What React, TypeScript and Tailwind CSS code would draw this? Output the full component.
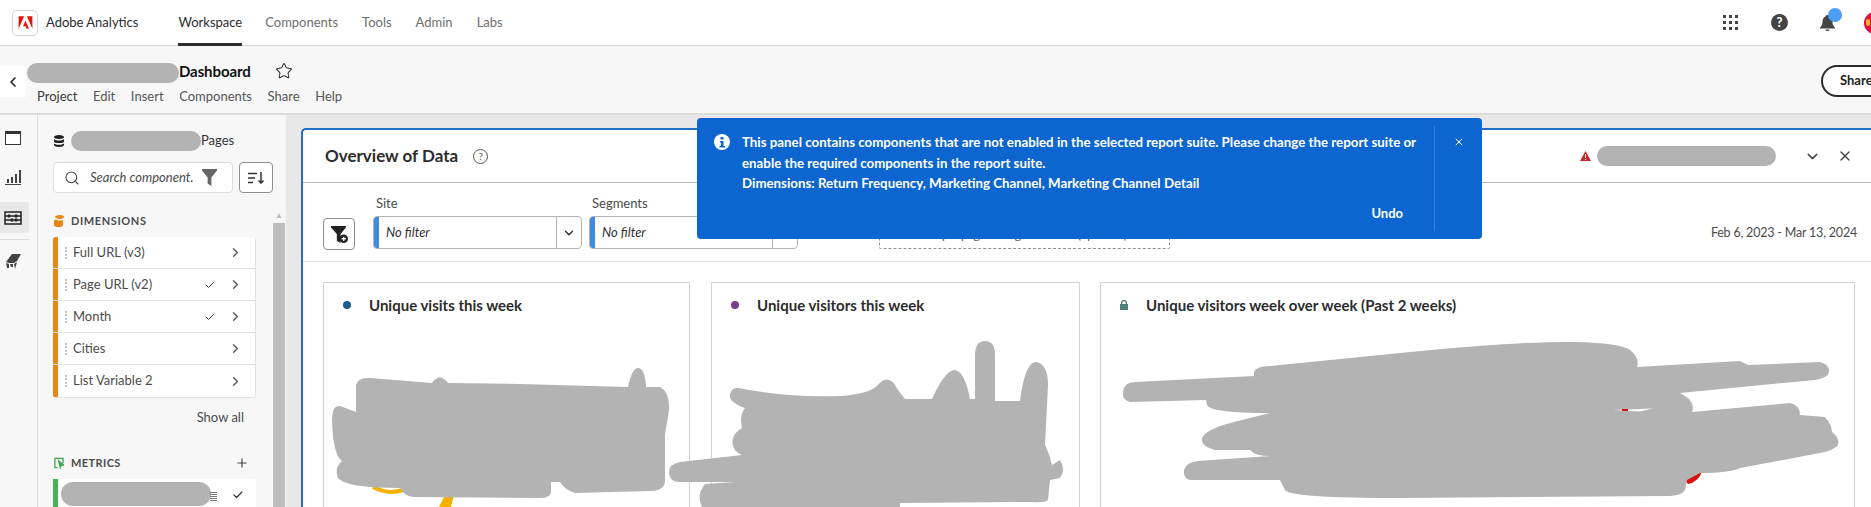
import { Check, ChevronDown, ChevronLeft, ChevronRight, Plus, Search, Star, X } from "lucide-react";

const navItems = ["Components", "Tools", "Admin", "Labs"];
const menuItems = ["Project", "Edit", "Insert", "Components", "Share", "Help"];

const dimensions = [
  { label: "Full URL (v3)", used: false },
  { label: "Page URL (v2)", used: true },
  { label: "Month", used: true },
  { label: "Cities", used: false },
  { label: "List Variable 2", used: false },
];

const Funnel = ({ className }: { className: string }) => (
  <svg viewBox="0 0 16 18" className={className} fill="currentColor">
    <path d="M0 0h16v1.5L10 9v9l-4-2.5V9L0 1.5z" />
  </svg>
);

const Row = ({ label, used }: { label: string; used: boolean }) => (
  <div className="flex h-[32px] items-center border-b border-[#e1e1e1] bg-white last:border-b-0">
    <span className="h-full w-[5px] shrink-0 bg-[#e68619]" />
    <span className="ml-[7px] h-[12px] w-[2px] shrink-0 border-l-2 border-dotted border-[#c8c8c8]" />
    <span className="ml-[6px] text-[13px] text-[#4b4b4b]">{label}</span>
    {used && <Check className="ml-auto h-[12px] w-[12px] text-[#444]" strokeWidth={2} />}
    <ChevronRight className={`${used ? "ml-[12px]" : "ml-auto"} mr-[12px] h-[15px] w-[15px] text-[#555]`} strokeWidth={2} />
  </div>
);

const FilterSelect = ({ label, width }: { label: string; width: string }) => (
  <div className={width}>
    <div className="mb-[5px] pl-[3px] text-[13px] leading-[16px] text-[#4b4b4b]">{label}</div>
    <div className="flex h-[33px] overflow-hidden rounded-[4px] border border-[#b3b3b3] bg-white">
      <span className="w-[5px] shrink-0 bg-[#3f8be0]" />
      <span className="ml-[7px] flex-1 text-[13px] leading-[31px] text-[#333] italic">No filter</span>
      <span className="flex w-[25px] items-center justify-center border-l border-[#b3b3b3]">
        <ChevronDown className="h-[14px] w-[14px] text-[#333]" strokeWidth={2.5} />
      </span>
    </div>
  </div>
);

const Card = ({ title, width, mark }: { title: string; width: string; mark: React.ReactNode }) => (
  <div className={`${width} h-[300px] shrink-0 border border-[#d3d3d3] bg-white`}>
    <div className="flex h-[44px] items-center">
      <span className="flex w-[45px] justify-center">{mark}</span>
      <span className="text-[15px] font-bold text-[#2c2c2c]">{title}</span>
    </div>
  </div>
);

export default function App() {
  return (
    <div className="relative flex h-[507px] w-[1871px] flex-col overflow-hidden bg-white font-['Lato',sans-serif]">
      <header className="flex h-[46px] shrink-0 items-center border-b border-[#d5d5d5] bg-white">
        <div className="ml-[12px] flex h-[26px] w-[26px] items-center justify-center rounded-[5px] border border-[#d5d5d5]">
          <svg viewBox="0 0 24 24" className="h-[15px] w-[15px]" fill="#eb1000">
            <path d="M14.3 2H23v20zM9.7 2H1v20zM12 9.2 17.6 22h-3.7l-1.700-4.200H8z" />
          </svg>
        </div>
        <span className="ml-[8px] text-[13px] text-[#2c2c2c]">Adobe Analytics</span>
        <nav className="ml-[40px] flex h-full gap-[24px] text-[13px] text-[#6e6e6e]">
          <span className="mr-[-1px] flex h-[46px] items-center border-b-[3px] border-[#2c2c2c] pt-[3px] text-[#2c2c2c]">Workspace</span>
          {navItems.map((item) => (
            <span key={item} className="flex items-center">
              {item}
            </span>
          ))}
        </nav>
        <div className="mr-[-15px] ml-auto flex items-center">
          <svg viewBox="0 0 15 15" className="h-[15px] w-[15px]" fill="#444">
            <path d="M0 0h3v3H0zM6 0h3v3H6zM12 0h3v3h-3zM0 6h3v3H0zM6 6h3v3H6zM12 6h3v3h-3zM0 12h3v3H0zM6 12h3v3H6zM12 12h3v3h-3z" />
          </svg>
          <span className="ml-[33px] flex h-[17px] w-[17px] items-center justify-center rounded-full bg-[#444] text-[13px] leading-none font-black text-white">?</span>
          <span className="relative ml-[32px] h-[16px] w-[15px]">
            <svg viewBox="0 0 15 16" className="h-[16px] w-[15px]" fill="#444">
              <path d="M7.5 0C9 0 9.5 1 9.5 1.5 12 2.5 12.5 5 12.5 7c0 3 1 4 2.5 5.5v1H0v-1C1.500 11 2.500 10 2.500 7c0-2 .5-4.500 3-5.500C5.500 1 6 0 7.500 0zM5.500 14.500h4C9.500 15.500 8.500 16 7.500 16s-2-.5-2-1.500z" />
            </svg>
            <span className="absolute top-[-7px] left-[8px] h-[14px] w-[14px] rounded-full bg-[#4b9cf5]" />
          </span>
          <span className="ml-[29px] flex h-[22px] w-[22px] items-center rounded-full bg-[#e0103a] pl-[2px]">
            <span className="h-[7px] w-[4px] rounded-full bg-[#f0b429]" />
          </span>
        </div>
      </header>

      <div className="flex h-[69px] shrink-0 border-b-2 border-[#dcdcdc] bg-[#f7f7f7]">
        <div className="mt-[20px] flex h-[31px] w-[26px] items-center justify-center bg-white">
          <ChevronLeft className="h-[16px] w-[16px] text-[#222]" strokeWidth={2.5} />
        </div>
        <div className="pt-[13px]">
          <div className="flex h-[24px] items-start">
            <span className="mt-[4px] ml-px h-[20px] w-[152px] rounded-full bg-[#b3b3b3]" />
            <span className="text-[15px] leading-[24px] font-bold tracking-[-0.1px] text-[#111]">Dashboard</span>
            <Star className="mt-[3px] ml-[24px] h-[18px] w-[18px] text-[#333]" strokeWidth={1.4} />
          </div>
          <div className="flex h-[28px] items-center gap-[15.6px] pl-[11px] text-[13px] text-[#555]">
            {menuItems.map((item, i) => (
              <span key={item} className={i === 0 ? "text-[#3a3a3a]" : ""}>
                {item}
              </span>
            ))}
          </div>
        </div>
        <div className="mt-[19px] mr-[-50px] ml-auto flex h-[32px] w-[100px] items-center rounded-full border-2 border-[#2c2c2c] bg-white pl-[17px] text-[13px] font-bold text-[#222]">
          Share
        </div>
      </div>

      <main className="flex min-h-0 flex-1 bg-[#e8e8e8]">
        <aside className="w-[38px] shrink-0 border-r border-[#dcdcdc] bg-[#f7f7f7] pt-[16px]">
          <div className="ml-[5px] h-[14px] w-[16px] border border-t-[3px] border-[#333] bg-white" />
          <svg viewBox="0 0 16 15" className="mt-[25px] ml-[5px] h-[15px] w-[16px]" fill="#444">
            <path d="M2 9h2v4H2zM6 7h2v6H6zM10 4h2v9h-2zM14 0h2v13h-2zM0 14h16v1H0z" />
          </svg>
          <div className="mt-[17px] flex h-[31px] w-[29px] items-center rounded-r-[3px] bg-[#e8e8e8] pl-[4px]">
            <svg viewBox="0 0 18 14" className="h-[14px] w-[18px]" fill="none" stroke="#222" strokeWidth="1.5">
              <path d="M1 1h16v12H1zM1 5h16M1 9h16" />
              <path d="M5 3.500v3M12 3.500v3M8 7.500v3M12 7.500v3" strokeWidth="2.500" />
            </svg>
          </div>
          <div className="mt-[6px] h-px w-[29px] bg-[#dcdcdc]" />
          <svg viewBox="0 0 16 15" className="mt-[14px] ml-[5px] h-[15px] w-[16px]" fill="#444">
            <path d="M7 0h9L12 7 9 9H4L1 8zM1 9l3 1v4H2zM5 10h3v3H6zM9 10l3-2-2 7z" />
          </svg>
        </aside>

        <section className="w-[235px] shrink-0 bg-[#f7f7f7] pl-[15px]">
          <div className="flex h-[47px] items-center pt-[5px]">
            <svg viewBox="0 0 10 12" className="ml-px h-[12px] w-[10px]" fill="#222">
              <path d="M0 2c0-1 2-2 5-2s5 1 5 2-2 2-5 2-5-1-5-2zM0 4c1 1 3 1.500 5 1.500S9 5 10 4v2.500C10 7.500 8 8 5 8s-5-.5-5-1.500zM0 8.500c1 1 3 1.200 5 1.200s4-.2 5-1.200V10c0 1-2 2-5 2s-5-1-5-2z" />
            </svg>
            <span className="ml-[7px] h-[20px] w-[130px] rounded-full bg-[#b3b3b3]" />
            <span className="text-[13px] text-[#333]">Pages</span>
          </div>
          <div className="flex">
            <div className="flex h-[31px] w-[180px] shrink-0 items-center rounded-[4px] border border-[#dcdcdc] bg-white pl-[10px]">
              <Search className="h-[16px] w-[16px] shrink-0 text-[#444]" strokeWidth={1.6} />
              <span className="ml-[10px] w-[104px] overflow-hidden text-[13px] whitespace-nowrap text-[#4b4b4b] italic">Search component.</span>
              <Funnel className="ml-[8px] h-[17px] w-[15px] text-[#666]" />
            </div>
            <div className="ml-[6px] flex h-[31px] w-[34px] shrink-0 items-center justify-center rounded-[4px] border border-[#8e8e8e] bg-white">
              <svg viewBox="0 0 16 12" className="h-[12px] w-[16px]" fill="none" stroke="#333" strokeWidth="1.500">
                <path d="M0 1.500h9M0 6h7M0 10.500h5M13 0v11M10.500 8.500 13 11l2.500-2.500" />
              </svg>
            </div>
          </div>
          <div className="mt-[20px] flex h-[16px] items-center">
            <svg viewBox="0 0 10 12" className="ml-px h-[12px] w-[10px]" fill="#e68619">
              <path d="M1 2c0-1 2-2 5-2s4 1 4 2-2 2-4 2-5-1-5-2zM0 6c0-1 1-1.500 2-1.500.5.5 2 1 4 1 2 0 3-.5 3-.5v5c0 1.500-2 2-4.500 2S0 11.500 0 10z" />
            </svg>
            <span className="ml-[7px] text-[11px] font-bold tracking-[0.6px] text-[#4b4b4b]">DIMENSIONS</span>
          </div>
          <div className="mt-[8px] w-[203px] overflow-hidden rounded-[3px] border-r border-b border-[#e1e1e1]">
            {dimensions.map((d) => (
              <Row key={d.label} label={d.label} used={d.used} />
            ))}
          </div>
          <div className="mt-[10px] h-[18px] w-[191px] text-right text-[13px] text-[#4b4b4b]">Show all</div>
          <div className="mt-[29px] flex h-[16px] w-[203px] items-center">
            <svg viewBox="0 0 11 12" className="ml-px h-[12px] w-[10px]" fill="none" stroke="#3da74e" strokeWidth="1.400">
              <path d="M4 11H1V1h9v5" />
              <path d="M5 3.500 10.500 8 8 8.500 7 11z" fill="#3da74e" />
            </svg>
            <span className="ml-[7px] text-[11px] font-bold tracking-[0.4px] text-[#4b4b4b]">METRICS</span>
            <Plus className="mr-[7px] ml-auto h-[14px] w-[14px] text-[#444]" strokeWidth={2} />
          </div>
          <div className="mt-[8px] flex h-[32px] w-[203px] rounded-t-[3px] bg-white">
            <span className="h-full w-[5px] bg-[#44b556]" />
            <span className="mt-[3px] ml-[3px] h-[24px] w-[150px] rounded-full bg-[#b3b3b3]" />
            <svg viewBox="0 0 9 10" className="mt-[12px] ml-[-2px] h-[10px] w-[9px]" fill="none" stroke="#777">
              <path d="M1 1.500h7M1 3.500h7M1 5.500h7M1 7.500h7M1 9.500h7" />
            </svg>
            <Check className="mt-[10px] ml-[14px] h-[12px] w-[12px] text-[#333]" strokeWidth={2.5} />
          </div>
        </section>

        <div className="flex w-[13px] shrink-0 flex-col bg-[#f7f7f7]">
          <div className="mt-[92px] flex h-[16px] w-[12px] items-center justify-center text-[8px] text-[#bdbdbd]">▲</div>
          <div className="w-[12px] flex-1 bg-[#bdbdbd]" />
        </div>

        <div className="min-w-0 flex-1 pt-[13px] pl-[15px]">
          <div className="h-[420px] w-[1600px] rounded-tl-[5px] border-t-2 border-l-2 border-[#1f6fc4] bg-white">
            <div className="flex h-[53px] items-center border-b border-[#b9b9b9]">
              <span className="ml-[22px] text-[17px] font-bold text-[#2c2c2c]">Overview of Data</span>
              <span className="ml-[15px] flex h-[15px] w-[15px] items-center justify-center rounded-full border border-[#555] text-[10px] leading-none text-[#555]">?</span>
              <svg viewBox="0 0 11 10" className="ml-[1092px] h-[10px] w-[11px]" fill="#c9252d">
                <path d="M5.500 0 11 10H0z" />
                <path d="M5 3h1v4H5zM5 8h1v1H5z" fill="#fff" />
              </svg>
              <span className="ml-[6px] h-[20px] w-[179px] rounded-full bg-[#b3b3b3]" />
              <ChevronDown className="ml-[28px] h-[17px] w-[17px] text-[#444]" strokeWidth={2} />
              <X className="ml-[16px] h-[16px] w-[16px] text-[#444]" strokeWidth={2} />
            </div>

            <div className="relative flex h-[79px] items-end border-b border-[#e1e1e1] pb-[12px] pl-[20px]">
              <div className="mb-[-1px] flex h-[32px] w-[32px] items-center justify-center rounded-[4px] border border-[#8e8e8e] bg-white">
                <svg viewBox="0 0 16 16" className="h-[17px] w-[17px]">
                  <path d="M0 0h14v1.500L9 7.500V16L5.500 14V7.500L0 1.500z" fill="#222" />
                  <circle cx="12" cy="12" r="4" fill="#222" />
                  <path d="M12 10v4M10 12h4" stroke="#fff" strokeWidth="1.200" />
                </svg>
              </div>
              <div className="ml-[18px]">
                <FilterSelect label="Site" width="w-[209px]" />
              </div>
              <div className="ml-[7px]">
                <FilterSelect label="Segments" width="w-[209px]" />
              </div>
              <div className="ml-[81px] flex h-[38px] w-[291px] items-center justify-center rounded-[2px] border border-dashed border-[#8e8e8e] pt-[10px] text-[12px] text-[#555]">
                Drop a page or segment here (optional)
              </div>
              <span className="mr-[44px] ml-auto pb-[6px] text-[12.5px] tracking-[-0.2px] whitespace-nowrap text-[#4b4b4b]">Feb 6, 2023 - Mar 13, 2024</span>
            </div>

            <div className="flex pt-[20px] pl-[20px]">
              <Card title="Unique visits this week" width="w-[367px]" mark={<span className="h-[8px] w-[8px] rounded-full bg-[#1f5a8c]" />} />
              <div className="ml-[21px]">
                <Card title="Unique visitors this week" width="w-[369px]" mark={<span className="h-[8px] w-[8px] rounded-full bg-[#7b3f8f]" />} />
              </div>
              <div className="ml-[20px]">
                <Card
                  title="Unique visitors week over week (Past 2 weeks)"
                  width="w-[755px]"
                  mark={
                    <svg viewBox="0 0 8 10" className="h-[10px] w-[8px]" fill="#4f7f78">
                      <path d="M1 4V3a3 3 0 0 1 6 0v1h1v6H0V4zM2.300 4h3.400V3a1.700 1.700 0 0 0-3.400 0z" />
                    </svg>
                  }
                />
              </div>
            </div>
          </div>
        </div>
      </main>

      {/* chart traces and the scribbles drawn over them */}
      <svg viewBox="0 0 1871 507" className="pointer-events-none absolute inset-0 h-[507px] w-[1871px]">
        <path d="M373 487Q388 495 403 490" fill="none" stroke="#f5b000" strokeWidth="4" />
        <path d="M445 495 439 507h12l3-12z" fill="#f5b000" />
        <path d="M1683 478 1702 472Q1698 482 1688 484z" fill="#d7120f" />
        <g fill="#b3b3b3">
          <path d="M356 385Q358 377 370 378L432 383Q440 372 448 383L520 384 628 387Q632 368 638 368 645 368 646 387L660 387Q670 392 669 410L665 435V480Q665 491 650 491L575 493Q565 490 560 482H551V492Q550 498 540 498L415 497Q405 497 400 488 345 488 338 478 334 468 342 461 333 455 332 420 332 405 340 406L356 412z" />
          <path d="M738 388Q790 398 840 396 870 394 878 385 889 372 898 390L905 399H932Q945 370 955 370 965 372 970 399H975V355Q975 341 985 341 995 341 995 355V401H1020Q1025 362 1036 362 1048 364 1048 385L1045 445Q1050 455 1052 465L1060 460Q1066 470 1060 478L1050 480 1048 500Q1045 503 1030 502L900 503V507H702Q696 495 705 484L735 482 680 482Q669 482 669 472 669 464 680 462L742 455Q730 450 733 438 735 432 742 428 739 415 745 408 728 402 730 394 732 387 738 388z" />
          <path d="M1254 372Q1256 366 1270 366L1400 353Q1520 341 1575 342 1620 343 1630 350 1640 358 1637 367L1740 361 1748 365 1820 362Q1830 365 1829 372 1828 378 1815 380L1680 393 1688 398Q1695 405 1692 412L1790 403Q1800 405 1800 415L1825 417Q1832 425 1832 432 1840 438 1838 445 1835 450 1820 453L1740 468Q1730 473 1700 473L1687 480 1685 490Q1683 495 1670 496L1400 498Q1290 498 1285 490L1280 480H1190Q1183 478 1184 470 1186 462 1198 461L1270 456Q1255 456 1250 450H1215Q1200 446 1202 438 1205 430 1230 423L1270 413Q1210 413 1207 405L1206 400 1130 402Q1122 400 1123 392 1124 382 1135 382L1254 376z" />
        </g>
        <path d="M1613 410 1653 408.500 1640 411.500z" fill="#fff" />
        <path d="M1622 409h6v2h-6z" fill="#d7120f" />
      </svg>

      <div className="absolute top-[118px] left-[697px] flex h-[121px] w-[785px] rounded-[4px] bg-[#0d66d0] text-[13.3px] font-bold text-white">
        <div className="pt-[16px] pl-[17px]">
          <svg viewBox="0 0 16 16" className="h-[16px] w-[16px]">
            <circle cx="8" cy="8" r="8" fill="#fff" />
            <path d="M6.500 3h3v2.500h-3zM6 7h3.500v5H11v1.500H5.500V12H7V8.500H6z" fill="#0d66d0" />
          </svg>
        </div>
        <div className="flex flex-1 flex-col pt-[14px] pl-[12px]">
          <p className="leading-[20.500px] whitespace-nowrap">
            This panel contains components that are not enabled in the selected report suite. Please change the report suite or
            <br />
            enable the required components in the report suite.
            <br />
            Dimensions: Return Frequency, Marketing Channel, Marketing Channel Detail
          </p>
          <span className="mt-[10px] mr-[31px] self-end text-[13px]">Undo</span>
        </div>
        <div className="my-[8px] flex w-[48px] justify-center border-l border-[#3b80d6] pt-[10px]">
          <X className="h-[12px] w-[12px]" strokeWidth={2} />
        </div>
      </div>
    </div>
  );
}
